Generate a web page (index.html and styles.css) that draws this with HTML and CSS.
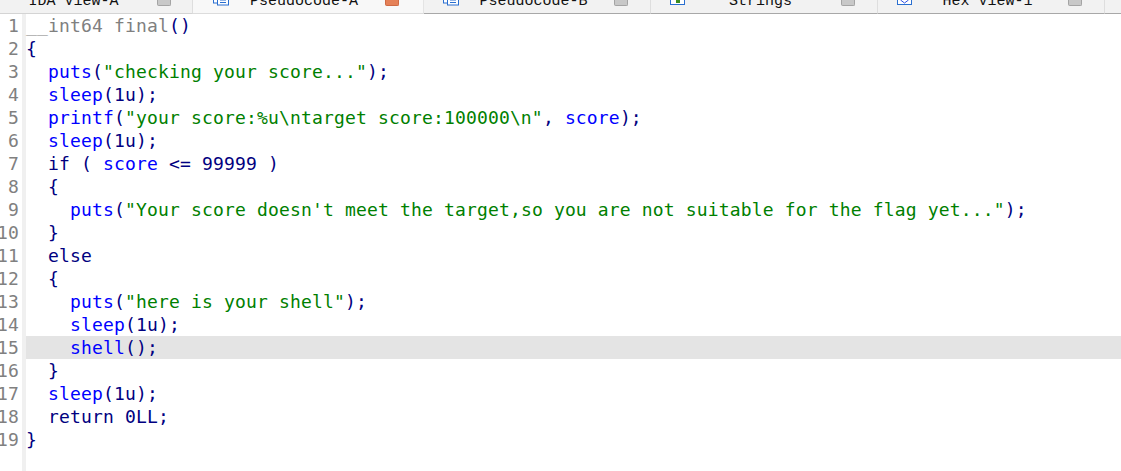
FILE: index.html
```html
<!DOCTYPE html>
<html lang="en">
<head>
<meta charset="utf-8">
<title>Pseudocode-A</title>
<link rel="stylesheet" href="styles.css">
</head>
<body>
<div class="tabs">
  <div class="tab tab-first"><span class="label">IDA View-A</span><span class="close"></span></div>
  <div class="tab tab-active"><svg class="icon" viewBox="0 0 16 6"><rect x="0.5" y="-6" width="11" height="9" fill="#fff" stroke="#2a6fd0"/><rect x="4.5" y="-3" width="11" height="8" fill="#fff" stroke="#2a6fd0"/><path d="M7 0h6M7 2.500h6" stroke="#2a6fd0"/></svg><span class="label">Pseudocode-A</span><span class="close close-red"></span></div>
  <div class="tab"><svg class="icon" viewBox="0 0 16 6"><rect x="0.5" y="-6" width="11" height="9" fill="#fff" stroke="#2a6fd0"/><rect x="4.5" y="-3" width="11" height="8" fill="#fff" stroke="#2a6fd0"/><path d="M7 0h6M7 2.500h6" stroke="#2a6fd0"/></svg><span class="label">Pseudocode-B</span><span class="close"></span></div>
  <div class="tab"><svg class="icon" viewBox="0 0 16 6"><rect x="0.500" y="-6" width="14" height="10.500" fill="#fff" stroke="#2a6fd0"/><rect x="6" y="0" width="4" height="3" fill="#3c8c1e"/></svg><span class="label">Strings</span><span class="close"></span></div>
  <div class="tab"><svg class="icon" viewBox="0 0 16 6"><rect x="0.500" y="-6" width="14" height="10.500" fill="#fff" stroke="#2a6fd0"/><path d="M3.500 0l4 3 4-3" fill="none" stroke="#3050e0"/></svg><span class="label">Hex View-1</span><span class="close"></span></div>
  <div class="tab tab-rest"></div>
</div>
<main class="editor">
  <div class="row"><span class="num">1</span><code class="code"><span class="g">__int64 final</span><span class="n">()</span></code></div>
  <div class="row"><span class="num">2</span><code class="code"><span class="n">{</span></code></div>
  <div class="row"><span class="num">3</span><code class="code">  <span class="b">puts</span><span class="n">(</span><span class="s">"checking your score..."</span><span class="n">);</span></code></div>
  <div class="row"><span class="num">4</span><code class="code">  <span class="b">sleep</span><span class="n">(1u);</span></code></div>
  <div class="row"><span class="num">5</span><code class="code">  <span class="b">printf</span><span class="n">(</span><span class="s">"your score:%u\ntarget score:100000\n"</span><span class="n">, </span><span class="b">score</span><span class="n">);</span></code></div>
  <div class="row"><span class="num">6</span><code class="code">  <span class="b">sleep</span><span class="n">(1u);</span></code></div>
  <div class="row"><span class="num">7</span><code class="code">  <span class="n">if ( </span><span class="b">score</span><span class="n"> &lt;= 99999 )</span></code></div>
  <div class="row"><span class="num">8</span><code class="code">  <span class="n">{</span></code></div>
  <div class="row"><span class="num">9</span><code class="code">    <span class="b">puts</span><span class="n">(</span><span class="s">"Your score doesn't meet the target,so you are not suitable for the flag yet..."</span><span class="n">);</span></code></div>
  <div class="row"><span class="num">10</span><code class="code">  <span class="n">}</span></code></div>
  <div class="row"><span class="num">11</span><code class="code">  <span class="n">else</span></code></div>
  <div class="row"><span class="num">12</span><code class="code">  <span class="n">{</span></code></div>
  <div class="row"><span class="num">13</span><code class="code">    <span class="b">puts</span><span class="n">(</span><span class="s">"here is your shell"</span><span class="n">);</span></code></div>
  <div class="row"><span class="num">14</span><code class="code">    <span class="b">sleep</span><span class="n">(1u);</span></code></div>
  <div class="row row-current"><span class="num">15</span><code class="code">    <span class="b">shell</span><span class="n">();</span></code></div>
  <div class="row"><span class="num">16</span><code class="code">  <span class="n">}</span></code></div>
  <div class="row"><span class="num">17</span><code class="code">  <span class="b">sleep</span><span class="n">(1u);</span></code></div>
  <div class="row"><span class="num">18</span><code class="code">  <span class="n">return 0LL;</span></code></div>
  <div class="row"><span class="num">19</span><code class="code"><span class="n">}</span></code></div>
  <div class="row"><span class="num"></span></div>
</main>
</body>
</html>
```
FILE: styles.css
```css
html, body {
  margin: 0;
  padding: 0;
  width: 1121px;
  height: 471px;
  overflow: hidden;
  background: #fff;
}
.tabs {
  display: flex;
  height: 14px;
  background: #f2f2f2;
  overflow: hidden;
}
.tab {
  width: 227px;
  height: 14px;
  flex: none;
  box-sizing: border-box;
  border-right: 1px solid #dedede;
  border-bottom: 1px solid #a8a8a8;
  display: flex;
  align-items: flex-start;
  padding: 0 22px 0 19px;
}
.tab-first {
  width: 193px;
  padding: 0 21px 0 0;
  border-bottom-color: #d4d4d4;
}
.tab-first .label {
  padding-left: 0;
  text-indent: -4px;
}
.tab-active {
  width: 231px;
  padding: 0 24px 0 20px;
  background: #f8f8f8;
  border-right-color: #e4e4e4;
  border-bottom-color: #dcdcdc;
}
.tab-rest {
  flex: 1;
  width: auto;
  padding: 0;
  border-right: 0;
}
.icon {
  width: 16px;
  height: 6px;
  flex: none;
}
.label {
  font: 15px/1 "Liberation Mono", monospace;
  color: #111;
  margin-top: -6px;
  flex: 1;
  text-align: center;
  white-space: nowrap;
  padding-right: 6px;
}
.close {
  width: 14px;
  height: 6px;
  flex: none;
  background: #c8c8c8;
  border: 1px solid #a4a4a4;
  border-top: 0;
  box-sizing: border-box;
  border-radius: 0 0 2px 2px;
}
.close-red {
  background: #e58158;
  border-color: #cf6a44;
}
.editor {
  display: block;
}
.row {
  display: flex;
  height: 23px;
  font: 18px/23px "DejaVu Sans Mono", monospace;
  letter-spacing: 0.16px;
}
.row-current {
  background: #e4e4e4;
}
.num {
  width: 19px;
  height: 23px;
  flex: none;
  padding-right: 3px;
  text-align: right;
  direction: rtl;
  color: #808080;
  white-space: nowrap;
  border-right: 4px solid #f0f0f0;
  background: #fff;
}
.code {
  font: inherit;
  white-space: pre;
}
.g { color: #808080; }
.n { color: #000080; }
.b { color: #0000ff; }
.s { color: #008000; }
```
